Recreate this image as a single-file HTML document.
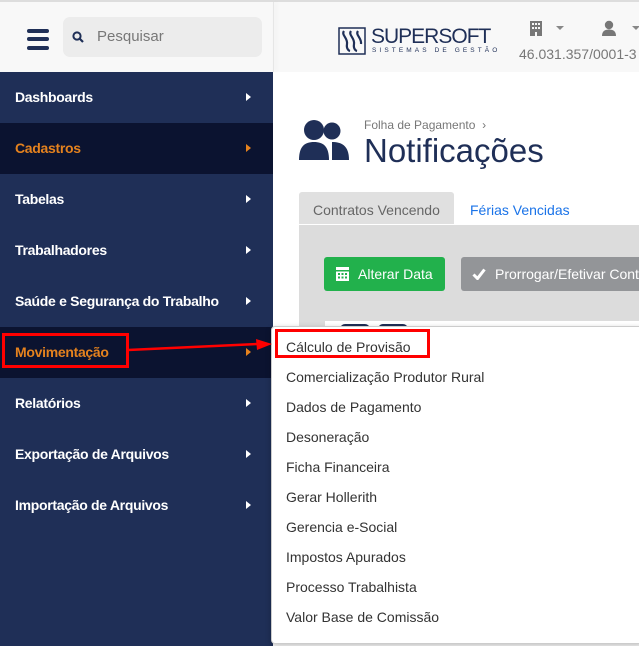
<!DOCTYPE html>
<html><head><meta charset="utf-8"><style>
*{margin:0;padding:0;box-sizing:border-box}
body{width:639px;height:646px;overflow:hidden;background:#fff;font-family:"Liberation Sans",sans-serif;position:relative}
.abs{position:absolute}
#hdr{left:0;top:0;width:639px;height:72px;background:#f8f8f8;border-top:2px solid #ddd}
#side{left:0;top:72px;width:273px;height:574px;background:#1f2f57}
.it{position:absolute;left:0;width:273px;height:51px;color:#fff;font-weight:bold;font-size:14px;line-height:51px;padding-left:15px;letter-spacing:-0.3px}
.it.d{background:#0b1330;color:#e5821e}
.it:after{content:"";position:absolute;left:246px;top:21px;border-left:5px solid currentColor;border-top:4.5px solid transparent;border-bottom:4.5px solid transparent}
.dd{position:absolute;left:271px;top:326px;width:372px;height:318px;background:#fff;border:1px solid #ccc;border-radius:4px;box-shadow:0 2px 6px rgba(0,0,0,.25)}
.dd div{position:absolute;left:14px;font-size:14px;color:#333;}
</style></head><body>
<div id="hdr" class="abs">
  <div class="abs" style="left:27px;top:27px;width:22px;height:4px;background:#1f2f57;border-radius:2px"></div>
  <div class="abs" style="left:27px;top:35px;width:22px;height:4px;background:#1f2f57;border-radius:2px"></div>
  <div class="abs" style="left:27px;top:44px;width:22px;height:4px;background:#1f2f57;border-radius:2px"></div>
  <div class="abs" style="left:63px;top:15px;width:199px;height:40px;background:#ececec;border-radius:7px"></div>
  <svg class="abs" style="left:72px;top:29px" width="12" height="12" viewBox="0 0 12 12"><circle cx="5" cy="5" r="3.6" fill="none" stroke="#1f2f57" stroke-width="2"/><path d="M7.5 7.5L11 11" stroke="#1f2f57" stroke-width="2.2"/></svg>
  <div class="abs" style="left:97px;top:26px;font-size:15px;color:#777">Pesquisar</div>
  <div class="abs" style="left:273px;top:0;width:1px;height:70px;background:#e6e6e6;box-shadow:2px 0 4px rgba(0,0,0,.08)"></div>
  <svg class="abs" style="left:338px;top:25px" width="28" height="28" viewBox="0 0 28 28"><rect x="1" y="1" width="26" height="26" fill="none" stroke="#1f2f57" stroke-width="1.5"/><path d="M6 4c-3 4 4 7 3 13s3 7 3 7M13 4c-3 4 4 7 3 13s3 7 3 7M20 4c-3 4 4 7 3 13" fill="none" stroke="#1f2f57" stroke-width="2.2"/></svg>
  <div class="abs" style="left:371px;top:23px;font-size:21px;color:#1f2f57;letter-spacing:-1px">SUPERSOFT</div>
  <div class="abs" style="left:372px;top:45px;font-size:6.5px;color:#1f2f57;letter-spacing:3.1px">SISTEMAS DE GESTÃO</div>
  <svg class="abs" style="left:530px;top:19px" width="12" height="15" viewBox="0 0 12 15"><rect width="12" height="15" fill="#777"/><g fill="#f8f8f8"><rect x="2" y="2" width="2" height="2"/><rect x="5" y="2" width="2" height="2"/><rect x="8" y="2" width="2" height="2"/><rect x="2" y="6" width="2" height="2"/><rect x="5" y="6" width="2" height="2"/><rect x="8" y="6" width="2" height="2"/><rect x="5" y="11" width="2" height="4"/></g></svg>
  <div class="abs" style="left:556px;top:24px;border-top:4px solid #888;border-left:4px solid transparent;border-right:4px solid transparent"></div>
  <svg class="abs" style="left:601px;top:18px" width="16" height="16" viewBox="0 0 16 16"><circle cx="8" cy="5" r="4.2" fill="#777"/><path d="M1 16c0-5 3-6.5 7-6.5s7 1.5 7 6.5z" fill="#777"/></svg>
  <div class="abs" style="left:632px;top:24px;border-top:4px solid #888;border-left:4px solid transparent;border-right:4px solid transparent"></div>
  <div class="abs" style="left:519px;top:44px;font-size:14px;color:#777;white-space:nowrap">46.031.357/0001-3</div>
</div>
<div id="side" class="abs"></div>
<div class="it" style="top:72px">Dashboards</div>
<div class="it d" style="top:123px">Cadastros</div>
<div class="it" style="top:174px">Tabelas</div>
<div class="it" style="top:225px">Trabalhadores</div>
<div class="it" style="top:276px">Saúde e Segurança do Trabalho</div>
<div class="it d" style="top:327px">Movimentação</div>
<div class="it" style="top:378px">Relatórios</div>
<div class="it" style="top:429px">Exportação de Arquivos</div>
<div class="it" style="top:480px">Importação de Arquivos</div>

<svg class="abs" style="left:299px;top:118px" width="50" height="42" viewBox="0 0 50 42"><circle cx="15" cy="12" r="10" fill="#1f2f57"/><circle cx="33" cy="13" r="8.5" fill="#1f2f57"/><path d="M0 42c0-14 6-18 15-18s15 4 15 18z" fill="#1f2f57"/><path d="M33 24c9 0 17 3 17 18H33z" fill="#1f2f57"/></svg>
<div class="abs" style="left:364px;top:118px;font-size:12px;color:#777">Folha de Pagamento &nbsp;›</div>
<div class="abs" style="left:364px;top:132px;font-size:33px;color:#1f2f57">Notificações</div>

<div class="abs" style="left:299px;top:192px;width:155px;height:32px;background:#e0e0e0;border-radius:3px 3px 0 0;font-size:14px;color:#666;padding:10px 0 0 14px">Contratos Vencendo</div>
<div class="abs" style="left:470px;top:202px;font-size:14px;color:#1a73e8">Férias Vencidas</div>
<div class="abs" style="left:299px;top:224px;width:340px;height:120px;background:#dcdcdc;border-top:1px solid #fff"></div>
<div class="abs" style="left:324px;top:257px;width:121px;height:34px;background:#22b14c;border-radius:3px;color:#fff;font-size:14px;line-height:34px;padding-left:34px">Alterar Data</div>
<svg class="abs" style="left:336px;top:267px" width="13" height="14" viewBox="0 0 13 14"><rect width="13" height="14" fill="#fff"/><g fill="#22b14c"><rect x="0" y="3" width="13" height="1.5"/><rect x="2" y="6" width="2" height="2"/><rect x="5.5" y="6" width="2" height="2"/><rect x="9" y="6" width="2" height="2"/><rect x="2" y="9.5" width="2" height="2"/><rect x="5.5" y="9.5" width="2" height="2"/><rect x="9" y="9.5" width="2" height="2"/></g></svg>
<div class="abs" style="left:461px;top:257px;width:190px;height:34px;background:#939598;border-radius:3px;color:#fff;font-size:14px;line-height:34px;padding-left:34px;white-space:nowrap">Prorrogar/Efetivar Cont</div>
<svg class="abs" style="left:472px;top:268px" width="14" height="12" viewBox="0 0 14 12"><path d="M1.5 6.5l4 4 7-9" fill="none" stroke="#fff" stroke-width="3"/></svg>
<div class="abs" style="left:325px;top:321px;width:314px;height:30px;background:#fff"></div>
<div class="abs" style="left:340px;top:324px;width:30px;height:10px;background:#1f2f57;border-radius:5px"></div>
<div class="abs" style="left:378px;top:324px;width:30px;height:10px;background:#1f2f57;border-radius:5px"></div>

<div class="dd">
<div style="top:12px">Cálculo de Provisão</div>
<div style="top:42px">Comercialização Produtor Rural</div>
<div style="top:72px">Dados de Pagamento</div>
<div style="top:102px">Desoneração</div>
<div style="top:132px">Ficha Financeira</div>
<div style="top:162px">Gerar Hollerith</div>
<div style="top:192px">Gerencia e-Social</div>
<div style="top:222px">Impostos Apurados</div>
<div style="top:252px">Processo Trabalhista</div>
<div style="top:282px">Valor Base de Comissão</div>
</div>
<div class="abs" style="left:275px;top:329px;width:155px;height:29px;border:3px solid #f00"></div>
<div class="abs" style="left:2px;top:333px;width:127px;height:35px;border:3px solid #f00"></div>
<svg class="abs" style="left:128px;top:338px" width="145" height="16" viewBox="0 0 145 16"><path d="M0 12L130 6" stroke="#f00" stroke-width="2.5"/><path d="M128 1L144 6L129 12z" fill="#f00"/></svg>
</body></html>
